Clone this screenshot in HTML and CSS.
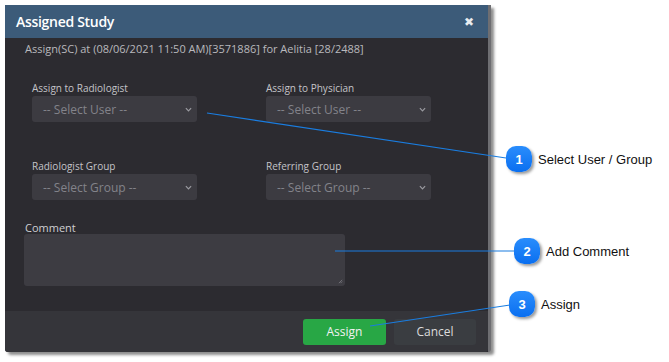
FILE: index.html
```html
<!DOCTYPE html>
<html lang="en">
<head>
    <meta charset="UTF-8">
    <title>Assigned Study</title>
    <link rel="stylesheet" href="styles.css">
</head>
<body>
    <div class="page">
        <div class="modal">
            <div class="modal-header">
                <h2>Assigned Study</h2>
                <span class="close">&#x2716;</span>
            </div>
            <div class="modal-body">
                <p class="info">Assign(SC) at (08/06/2021 11:50 AM)[3571886] for Aelitia [28/2488]</p>
                <div class="grid">
                    <div class="field">
                        <label>Assign to Radiologist</label>
                        <div class="select">-- Select User --<svg viewBox="0 0 8 5"><path d="M1 1l3 3 3-3"/></svg></div>
                    </div>
                    <div class="field">
                        <label>Assign to Physician</label>
                        <div class="select">-- Select User --<svg viewBox="0 0 8 5"><path d="M1 1l3 3 3-3"/></svg></div>
                    </div>
                    <div class="field">
                        <label>Radiologist Group</label>
                        <div class="select">-- Select Group --<svg viewBox="0 0 8 5"><path d="M1 1l3 3 3-3"/></svg></div>
                    </div>
                    <div class="field">
                        <label>Referring Group</label>
                        <div class="select">-- Select Group --<svg viewBox="0 0 8 5"><path d="M1 1l3 3 3-3"/></svg></div>
                    </div>
                </div>
                <div class="comment">
                    <label>Comment</label>
                    <div class="textarea">
                        <svg class="grip" viewBox="0 0 6 6"><path d="M1 5l4-4M3 5l2-2"/></svg>
                    </div>
                </div>
            </div>
            <div class="modal-footer">
                <button class="btn btn-assign">Assign</button>
                <button class="btn btn-cancel">Cancel</button>
            </div>
        </div>

        <!-- callout lines -->
        <svg class="lines" width="669" height="362">
            <line x1="207" y1="113" x2="506" y2="158"/>
            <line x1="335" y1="251" x2="515" y2="251"/>
            <line x1="370" y1="326" x2="510" y2="305"/>
        </svg>

        <div class="callout c1"><span class="num">1</span>Select User / Group</div>
        <div class="callout c2"><span class="num">2</span>Add Comment</div>
        <div class="callout c3"><span class="num">3</span>Assign</div>
    </div>
</body>
</html>
```

FILE: styles.css
```css
body {
    margin: 0;
    background: #fff;
    font-family: "Open Sans", sans-serif;
}
.page {
    position: relative;
    width: 669px;
    height: 362px;
    padding: 5px;
    box-sizing: border-box;
}
.modal {
    width: 483px;
    background: #2c2b30;
    box-shadow: 3px 3px 3px rgba(0,0,0,0.45);
    border-right: 3px solid #6e6e72;
    border-radius: 0 0 3px 3px;
}
.modal-header {
    height: 33px;
    background: #3c5b79;
    display: flex;
    align-items: center;
    justify-content: space-between;
    padding: 0 14px 0 11px;
}
.modal-header h2 {
    margin: 0;
    font-size: 14px;
    font-weight: 600;
    color: #fff;
    letter-spacing: -0.3px;
}
.close {
    color: #e8ecf0;
    font-size: 12px;
    font-family: "DejaVu Sans", sans-serif;
}
.modal-body {
    height: 273px;
    padding: 3px 0 0 19px;
    box-sizing: border-box;
}
.info {
    margin: 0 0 0 1px;
    font-size: 11px;
    color: #b9b9bd;
    line-height: 16px;
}
.grid {
    display: grid;
    grid-template-columns: 165px 165px;
    column-gap: 69px;
    row-gap: 37px;
    margin: 24px 0 0 8px;
}
.field label,
.comment label {
    display: block;
    font-size: 10px;
    color: #c4c4c8;
    line-height: 14px;
}
.select {
    height: 26px;
    margin-top: 1px;
    background: #3c3b41;
    border-radius: 3px;
    display: flex;
    align-items: center;
    justify-content: space-between;
    padding: 0 5px 0 11px;
    font-size: 12px;
    color: #83838a;
}
.select svg {
    width: 7px;
    height: 5px;
    fill: none;
    stroke: #9a9aa0;
    stroke-width: 1.4;
}
.comment {
    margin-top: 21px;
}
.comment label {
    font-size: 11px;
    color: #cfcfd3;
    margin-left: 1px;
}
.textarea {
    position: relative;
    width: 321px;
    height: 52px;
    margin-top: -1px;
    background: #3d3c42;
    border-radius: 3px;
}
.grip {
    position: absolute;
    right: 2px;
    bottom: 2px;
    width: 5px;
    height: 5px;
    stroke: #8a8a90;
    stroke-width: 0.8;
}
.modal-footer {
    height: 41px;
    background: #35353a;
    display: flex;
    justify-content: flex-end;
    align-items: center;
    gap: 8px;
    padding-right: 12px;
    border-radius: 0 0 3px 3px;
}
.btn {
    width: 83px;
    height: 26px;
    border: 0;
    border-radius: 3px;
    font-family: "Open Sans", sans-serif;
    font-size: 12px;
}
.btn-assign {
    background: #28a745;
    color: #f2f2f2;
}
.btn-cancel {
    width: 82px;
    background: #3a3d41;
    color: #dcdcdc;
}
.lines {
    position: absolute;
    left: 0;
    top: 0;
}
.lines line {
    stroke: #1a7de0;
    stroke-width: 1.2;
}
.callout {
    position: absolute;
    display: flex;
    align-items: center;
    gap: 6px;
    font-family: "Liberation Sans", Arial, sans-serif;
    font-size: 13px;
    color: #111;
}
.num {
    width: 26px;
    height: 26px;
    border-radius: 10px;
    background: linear-gradient(#2a8dfc, #0a6ff0);
    box-shadow: 2px 2px 3px rgba(0,0,0,0.4);
    color: #fff;
    font-weight: bold;
    font-size: 13px;
    display: flex;
    align-items: center;
    justify-content: center;
}
.c1 { left: 506px; top: 146px; }
.c2 { left: 514px; top: 238px; }
.c3 { left: 509px; top: 291px; }
```
